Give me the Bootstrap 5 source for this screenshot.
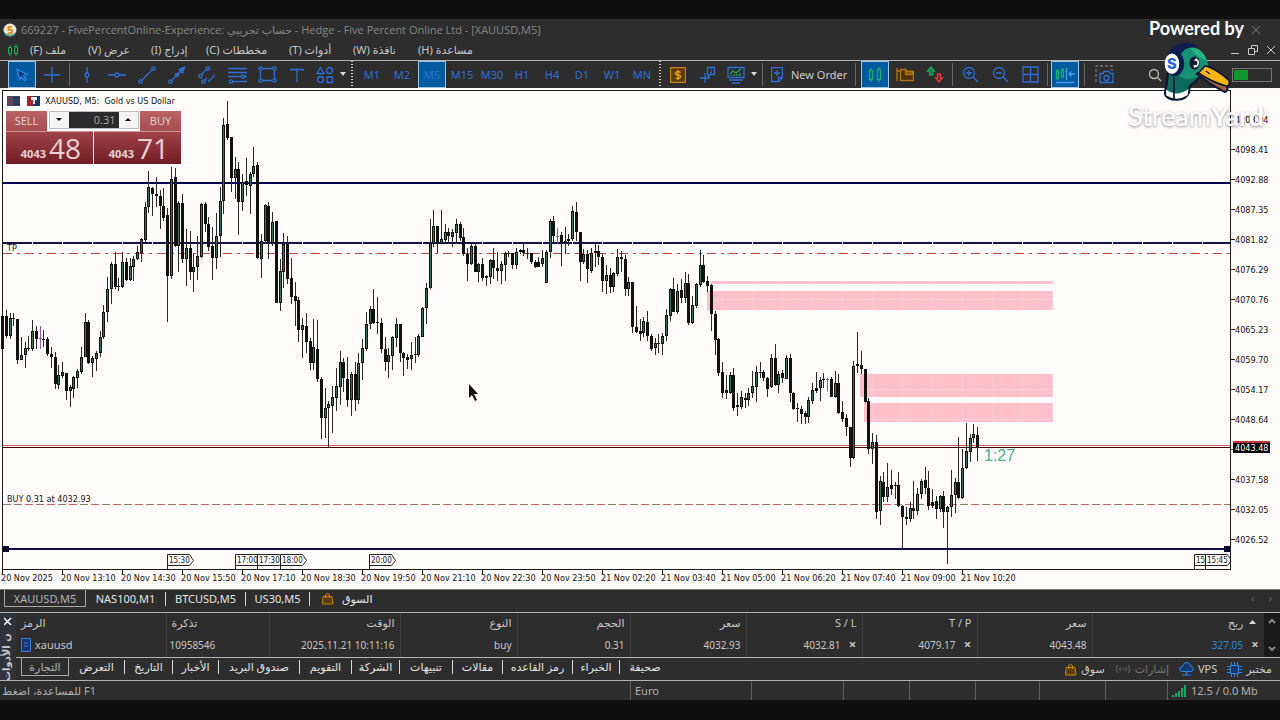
<!DOCTYPE html>
<html lang="ar" dir="ltr">
<head>
<meta charset="utf-8">
<meta name="viewport" content="width=device-width, initial-scale=1">
<title>XAUUSD,M5</title>
<link href="https://cdn.jsdelivr.net/npm/bootstrap@5.3.0/dist/css/bootstrap.min.css" rel="stylesheet">
<style>
:root{--ui:#2d2d2d;--rule:#b4b4b4;--blue:#2f6fd6}
body{background:#0f0f0f;color:#c8c8c8;font:11px/16px "Noto Sans","Open Sans","DejaVu Sans",sans-serif;padding:19px 0}
button{font:inherit;color:inherit;background:none;border:0;padding:0}
svg{display:block}
.app{background:var(--ui)}
.titlebar{height:21px;padding:0 3px;color:#858585;gap:4px;font-family:"Open Sans","DejaVu Sans",sans-serif}
.menubar{height:20px}
.menubar button{white-space:nowrap;text-align:left}
.tools{height:28px;border-top:1px solid var(--rule);color:var(--blue);padding-left:7px}
.tool{width:30px;height:27px;display:flex;align-items:center;justify-content:center;flex:none}
.tool.on{background:#005a9e;border:1px solid #9fc6e6;width:28px;margin:0 1px}
.tool.slim{width:26px}
.drop{width:9px;display:flex;justify-content:center}
.tools svg{fill:none;stroke:currentColor;stroke-width:1.3}
.split{width:5px;height:23px;flex:none;background:linear-gradient(#666,#666) center/1px 100% no-repeat}
.split.wide{width:9px}
.grip{width:10px;height:27px;flex:none;background:repeating-linear-gradient(#ccc 0 1px,transparent 1px 3px) center/2px 100% no-repeat}
.grip.near{width:6px}
.meter{width:40px;height:14px;border:1px solid #777;padding:1px}
.meter div{background:#13962c;width:38%;height:100%}
.stage{position:relative;background:#fffcfb}
.plot{width:100%;height:auto;font-family:"DejaVu Sans Condensed","DejaVu Sans",sans-serif;font-size:9px}
.caption{position:absolute;left:7px;top:6px;color:#111;gap:7px;line-height:14px;font:9px/14px "DejaVu Sans Condensed","DejaVu Sans",sans-serif}
.deal{position:absolute;left:6px;top:23px;width:175px;color:#ecd3d3;font-family:"Open Sans",sans-serif}
.side{height:20px;width:41px;background:linear-gradient(#bb6365,#a44c50);font-size:11px;line-height:20px}
.quote{height:33px;width:87px;background:linear-gradient(#a0434a,#701c24);border-top:1px solid #cf9697;gap:3px;padding-right:12px}
.quote b{font-size:11px;line-height:14px;margin-bottom:3px}
.quote span{font-size:28px;line-height:32px}
.spin{height:18px;width:90px;border:1px solid #bbb}
.spin button{width:19px;background:#f4f4f4;color:#111;display:flex;align-items:center;justify-content:center}
.spin input{width:50px;background:#2b2b2b;border:0;color:#aaa;text-align:right;font-size:11px;padding:0 3px;border-radius:0}
.brandmark{position:absolute;right:15px;top:18px;width:137px;color:#fff;font-family:Lato,sans-serif;pointer-events:none}
.brandmark .by{font-size:18px;line-height:20px;font-weight:700;padding-left:21px;white-space:nowrap}
.brandmark svg{margin:4px 0 0 32px}
.brandmark .word{font-size:27px;line-height:28px;text-shadow:0 1px 3px #0007}
.tabs{height:23px}
.tabs button{white-space:nowrap;font-size:11px;height:17px;line-height:17px}
.tabs .sel{border:1px solid #a9a9a9;border-top:0;color:#b5b5b5}
.tabs .bar-after{border-right:1px solid #d8d8d8;height:14px;line-height:14px;margin-top:2px}
.charttabs{color:#e6e6e6;border-top:1px solid #777}
.box-top{border-top:1px solid var(--rule)}
.dock{width:16px;background:#30323a;position:relative;overflow:hidden}
.dock span{position:absolute;left:0;bottom:5px;height:42px;writing-mode:vertical-rl;transform:rotate(180deg);font:bold 10px/14px "DejaVu Sans",sans-serif;white-space:nowrap}
.trades{table-layout:fixed;width:100%;height:44px;border-collapse:collapse}
.trades th,.trades td{font-weight:400;height:20px;line-height:18px;padding:1px 5px 1px 3px;text-align:right;border-right:1px solid #404040;white-space:nowrap}
.trades td{font-size:10px}
.trades .start{text-align:left;padding-left:5px}
.trades th:last-child,.trades td:last-child{border-right:0;padding-right:5px}
.kill{font-weight:700;font-size:13px;margin-left:8px;width:8px;line-height:12px}
.scroller{width:16px;background:#191919;color:#888}
.tooltabs{height:23px;color:#e6e6e6}
.tooltabs .sel{width:48px;margin-left:5px;height:18px}
.tooltabs a{color:#cfcfcf;text-decoration:none;display:flex;align-items:center;gap:4px}
.services{gap:10px}
.status{height:20px;line-height:20px;color:#b0b0b0}
.status>div{border-right:1px solid #5e5e5e;padding-left:4px}
</style>
</head>
<body>
<div class="app">
  <header>
    <div class="titlebar d-flex align-items-center">
      <svg width="14" height="14" viewBox="0 0 14 14"><circle cx="7" cy="7" r="6.5" fill="#e9e4cf"/><path d="M1 9Q7 15 13 9L11 13H3Z" fill="#3c9a88"/><path d="M9 4H5.500V7Q9 6 9 8.500T5 10" fill="none" stroke="#d48b17" stroke-width="1.700"/></svg>
      <span>669227 - FivePercentOnline-Experience: حساب تجريبي - Hedge - Five Percent Online Ltd - [XAUUSD,M5]</span>
      <button class="ms-auto me-3" aria-label="Close"><svg width="10" height="10" viewBox="0 0 10 10" stroke="#777"><path d="M1 1 9 9M9 1 1 9"/></svg></button>
    </div>
    <nav class="menubar d-flex align-items-center" aria-label="Menu">
      <svg class="ms-2" width="10" height="13" viewBox="0 0 10 13" fill="none" stroke="#1fae5b"><path d="M.500 3.500h3v6h-3zM6.500 2.500h3v7h-3zM2 1v2M2 9v3M8 0v2M8 9v3"/></svg>
      <button dir="rtl" style="margin-left:12px;width:58px;text-align:left">ملف (F)</button>
      <button dir="rtl" style="width:63px">عرض (V)</button>
      <button dir="rtl" style="width:55px">إدراج (I)</button>
      <button dir="rtl" style="width:83px">مخططات (C)</button>
      <button dir="rtl" style="width:64px">أدوات (T)</button>
      <button dir="rtl" style="width:65px">نافذة (W)</button>
      <button dir="rtl">مساعدة (H)</button>
      <div class="ms-auto d-flex gap-2 me-1">
        <button aria-label="Minimize"><svg width="10" height="10" stroke="#ccc"><path d="M1 8.500h8"/></svg></button>
        <button aria-label="Restore"><svg width="10" height="10" fill="none" stroke="#ccc"><path d="M.500 3.500h6v6h-6zM3.500 3V.500h6v6H7"/></svg></button>
        <button aria-label="Close chart"><svg width="10" height="10" stroke="#ccc"><path d="M1 1 9 9M9 1 1 9"/></svg></button>
      </div>
    </nav>
    <div class="tools d-flex align-items-center" role="toolbar">
      <button class="tool on" aria-label="Cursor"><svg width="16" height="16"><path d="M3 2.500 13 7 9.500 8.500 12 12 10.500 13.500 7.500 10 5.500 12.500Z" fill="#123a6e" stroke="#3386e6"/></svg></button>
      <button class="tool" aria-label="Crosshair"><svg width="16" height="16"><path d="M8 0v6M8 10v6M0 8h6M10 8h6M6 8h4M8 6v4"/></svg></button>
      <span class="split"></span>
      <button class="tool" aria-label="Vertical line"><svg width="16" height="16"><path d="M8 0v6M8 10v6"/><circle cx="8" cy="8" r="2"/></svg></button>
      <button class="tool" aria-label="Horizontal line"><svg width="18" height="16"><path d="M0 8h7M11 8h7"/><circle cx="9" cy="8" r="2"/></svg></button>
      <button class="tool" aria-label="Trend line"><svg width="18" height="18"><path d="M3.500 14.500 14.500 3.500"/><circle cx="2.500" cy="15.500" r="1.700"/><circle cx="15.500" cy="2.500" r="1.700"/></svg></button>
      <button class="tool" aria-label="Arrow line"><svg width="18" height="18"><path d="M3.500 14.500 15 3"/><path d="M11 3.500 16.500 1 14.500 7Z" fill="currentColor"/><circle cx="2.500" cy="15.500" r="1.700"/><circle cx="9" cy="9" r="1.700"/></svg></button>
      <button class="tool" aria-label="Channel"><svg width="18" height="18"><path d="M3 9 9 3M6.500 14.500 9 12M10 16l7-7"/><circle cx="2.500" cy="10" r="1.700"/><circle cx="10" cy="2.500" r="1.700"/><circle cx="5.500" cy="15.500" r="1.700"/></svg></button>
      <button class="tool" aria-label="Fibonacci"><svg width="19" height="18"><path d="M0 2.500h19M0 6.500h19M0 10.500h13M5 15.500h14M17 10.500h2"/><circle cx="15" cy="10.500" r="1.700"/><circle cx="3" cy="15.500" r="1.700"/></svg></button>
      <button class="tool" aria-label="Rectangle"><svg width="19" height="17"><path d="M5 2.500h9M5 14.500h9M2.500 5v7M16.500 5v7"/><circle cx="2.500" cy="2.500" r="1.700"/><circle cx="16.500" cy="2.500" r="1.700"/><circle cx="2.500" cy="14.500" r="1.700"/><circle cx="16.500" cy="14.500" r="1.700"/></svg></button>
      <button class="tool" aria-label="Text"><svg width="14" height="14"><path d="M1 3V1.500h12V3M7 1.500V14"/></svg></button>
      <button class="tool slim" aria-label="Shapes"><svg width="18" height="18"><path d="M4.500 1.500 8 7.500H1ZM11 11h5.500v5.500H11z"/><circle cx="13.500" cy="4.500" r="3"/><circle cx="4.500" cy="13.500" r="3"/></svg></button>
      <button class="drop" aria-label="More shapes"><svg width="8" height="5"><path d="M1 0h6L4 4z" fill="#ddd" stroke="none"/></svg></button>
      <span class="grip"></span>
      <button class="tool">M1</button><button class="tool">M2</button><button class="tool on">M5</button><button class="tool">M15</button><button class="tool">M30</button><button class="tool">H1</button><button class="tool">H4</button><button class="tool">D1</button><button class="tool">W1</button><button class="tool">MN</button>
      <span class="grip near"></span>
      <button class="tool" aria-label="Trade"><svg width="16" height="16"><path d="M.500.500h15v15H.500z" fill="#5c3d05" stroke="#c4830f"/><path d="M10.500 5.500Q8 3.500 6 5.500T8 8 10 10.500 5.500 11M8 3v10" stroke="#f0a21a"/></svg></button>
      <button class="tool" aria-label="Data window"><svg width="18" height="18"><path d="M6 7v10M1 12h10M8.500 1.500h7v7h-4l-2 2v-2h-1zM12 3v1M12 5v3"/></svg></button>
      <button class="tool slim" aria-label="Indicators"><svg width="18" height="18"><path d="M1 1.500h16v10H1zM2 14h14M5 17h8"/><path d="m3 8 3-3 3 2 5-4M4 10V9M7 10V8M10 10V8M13 10V7" stroke="#24a862"/></svg></button>
      <button class="drop" aria-label="More indicators"><svg width="8" height="5"><path d="M1 0h6L4 4z" fill="#ddd" stroke="none"/></svg></button>
      <span class="split wide"></span>
      <button class="d-flex align-items-center gap-2 ps-1 text-nowrap" style="width:84px;color:#ccc"><svg width="12" height="16" class="flex-shrink-0" style="color:#2f6fd6"><path d="M.500.500h11v10l-4 4H.500zM7.500 14.500v-4h4M6 3v6M3 6h6"/></svg>New Order</button>
      <span class="split wide"></span>
      <button class="tool on" aria-label="Candles"><svg width="14" height="16" style="color:#17b06b"><path d="M1.500 3.500h3v9h-3zM9.500 2.500h3v10h-3zM3 1v2M3 13v2M11 0v2M11 13v3"/></svg></button>
      <button class="tool" aria-label="Templates"><svg width="18" height="16" style="color:#b3760f"><path d="M1 1v13M1 4h3M4.500 2.500h5l2 2h6v9h-13z" fill="#4a3209"/><path d="M9.500 4.500h7v3h-7z" fill="#7a500c"/></svg></button>
      <button class="tool" aria-label="Auto trading"><svg width="18" height="18"><path d="M5 1 1.500 5h2v4h3V5h2z" fill="#14733f" stroke="#1da35d"/><path d="m13 16 3.500-4h-2V8h-3v4h-2z" fill="#7c1d25" stroke="#e03a47"/></svg></button>
      <span class="split"></span>
      <button class="tool" aria-label="Zoom in"><svg width="17" height="17"><circle cx="7" cy="7" r="5.500"/><path d="m11 11 5 5M7 4v6M4 7h6"/></svg></button>
      <button class="tool" aria-label="Zoom out"><svg width="17" height="17"><circle cx="7" cy="7" r="5.500"/><path d="m11 11 5 5M4 7h6"/></svg></button>
      <button class="tool" aria-label="Tile windows"><svg width="17" height="17"><path d="M1 1h15v15H1zM8.500 1v15M1 8.500h15"/></svg></button>
      <span class="split"></span>
      <button class="tool on" aria-label="Chart shift"><svg width="20" height="18"><path d="M1.500 5h2v7h-2zM6.500 4h2v7h-2zM2.500 3v2M2.500 12v2M7.500 2v2" stroke="#17b06b"/><path d="M11.500 2v12M14 8h6M16.500 5.500 14 8l2.500 2.500M1 16.500h18" stroke="#4a9cf0"/></svg></button>
      <span class="split wide"></span>
      <button class="tool" aria-label="Screenshot"><svg width="19" height="19"><path d="M1 17V1h16v5" stroke-dasharray="3 2" stroke="#777"/><path d="M5 8.500h3l1-2h5l1 2h3v9H5z"/><circle cx="11.500" cy="13" r="2.500"/></svg></button>
      <button class="tool ms-auto" aria-label="Search" style="color:#bbb"><svg width="14" height="14"><circle cx="6" cy="6" r="4.500"/><path d="m9 9 4 4"/></svg></button>
      <button class="tool ms-4 me-2 ps-1" aria-label="Level"><svg width="12" height="14"><path d="M6 1 2 5h3v5h3V5h2z" stroke="#1da35d"/></svg></button>
      <div class="meter me-2" role="img" aria-label="Connection"><div></div></div>
    </div>
  </header>

  <main class="stage">
    <svg class="plot" viewBox="0 88 1280 501" id="plot" role="img" aria-label="XAUUSD M5"></svg>
    <div class="caption d-flex align-items-center">
      <svg width="13" height="10"><path d="M0 0h13v10H0z" fill="#34486e"/><path d="M0 2h6M0 5h6M0 8h6" stroke="#c0392b"/><path d="M6 2h7M6 5h7M6 8h7" stroke="#1c2a4b"/></svg>
      <svg width="13" height="10"><path d="M0 0h6v10H0z" fill="#a5202a"/><path d="M6 0h7v10H6z" fill="#17356f"/><path d="M4 1h6v3H8v4H6V4H4z" fill="#fff"/></svg>
      <span style="margin-left:-2px;white-space:pre">XAUUSD, M5:  Gold vs US Dollar</span>
    </div>
    <div class="deal">
      <div class="d-flex justify-content-between">
        <button class="side">SELL</button>
        <div class="spin d-flex">
          <button aria-label="Less"><svg width="6" height="4"><path d="M0 0h6L3 3z"/></svg></button>
          <input class="flex-fill" aria-label="Volume" value="0.31">
          <button aria-label="More"><svg width="6" height="4"><path d="M0 3h6L3 0z"/></svg></button>
        </div>
        <button class="side">BUY</button>
      </div>
      <div class="d-flex justify-content-between">
        <div class="quote d-flex align-items-end justify-content-end"><b>4043</b><span>48</span></div>
        <div class="quote d-flex align-items-end justify-content-end"><b>4043</b><span>71</span></div>
      </div>
    </div>
  </main>

  <nav class="tabs charttabs d-flex" aria-label="Charts">
    <button class="sel ms-1" style="width:82px">XAUUSD,M5</button>
    <button class="bar-after" style="width:80px">NAS100,M1</button>
    <button class="bar-after" style="width:80px">BTCUSD,M5</button>
    <button class="bar-after" style="width:64px">US30,M5</button>
    <button class="d-flex align-items-center gap-2 ms-2 ps-1"><svg width="12" height="13" fill="#5d3c02" stroke="#c4830f"><path d="M1 4.500h9l1 7.500H.500zM3.500 6V3q2-3.500 4 0v3"/></svg>السوق</button>
    <span class="ms-auto me-2" style="color:#666">‹ &nbsp; &nbsp; ›</span>
  </nav>

  <section class="box-top d-flex">
    <div class="dock flex-shrink-0"><button class="d-block ms-1 mt-1" aria-label="Close toolbox"><svg width="8" height="9" stroke="#fff" stroke-width="1.500"><path d="M0 1 7 8M7 1 0 8"/></svg></button><span dir="rtl">ن الأدوات</span></div>
    <div class="flex-fill" style="min-width:0">
      <div class="d-flex">
        <table class="trades">
          <colgroup><col style="width:150px"><col style="width:103px"><col style="width:131px"><col style="width:117px"><col style="width:113px"><col style="width:116px"><col style="width:116px"><col style="width:115px"><col style="width:115px"><col></colgroup>
          <thead><tr><th class="start">الرمز</th><th class="start">تذكرة</th><th>الوقت</th><th>النوع</th><th>الحجم</th><th>سعر</th><th>S / L</th><th>T / P</th><th>سعر</th><th>ربح &nbsp;<svg class="d-inline-block" width="7" height="8" fill="#ddd"><path d="M0 4h7L3.500 0z"/></svg>&nbsp;</th></tr></thead>
          <tbody><tr><td class="start" style="font-size:11px"><span class="d-flex align-items-center gap-1"><svg width="10" height="14" fill="#14386e" stroke="#3f7fd8"><path d="M.500.500h9v13h-9zM3 5h4M3 8h4"/></svg>xauusd</span></td><td class="start" style="padding-left:3px">10958546</td><td>2025.11.21 10:11:16</td><td>buy</td><td>0.31</td><td>4032.93</td><td>4032.81<button class="kill">×</button></td><td>4079.17<button class="kill">×</button></td><td>4043.48</td><td><span style="color:#2f86cf">327.05</span><button class="kill">×</button></td></tr></tbody>
        </table>
        <div class="scroller flex-shrink-0 d-flex flex-column align-items-center justify-content-between py-1"><svg width="8" height="8" fill="none" stroke="#888" stroke-width="2"><path d="m1 6 3-3 3 3"/></svg><svg width="8" height="8" fill="none" stroke="#888" stroke-width="2"><path d="m1 2 3 3 3-3"/></svg></div>
      </div>
      <div class="box-top tabs tooltabs d-flex">
        <button class="sel">التجارة</button>
        <button class="bar-after" style="width:56px">التعرض</button>
        <button class="bar-after" style="width:48px">التاريخ</button>
        <button class="bar-after" style="width:46px">الأخبار</button>
        <button class="bar-after" style="width:81px">صندوق البريد</button>
        <button class="bar-after" style="width:52px">التقويم</button>
        <button class="bar-after" style="width:48px">الشركة</button>
        <button class="bar-after" style="width:53px">تنبيهات</button>
        <button class="bar-after" style="width:50px">مقالات</button>
        <button class="bar-after" style="width:70px">رمز القاعده</button>
        <button class="bar-after" style="width:47px">الخبراء</button>
        <button class="bar-after border-0" style="width:50px">صحيفة</button>
        <div class="ms-auto d-flex services me-2">
          <a href="#"><svg width="12" height="13" fill="#5d3c02" stroke="#c4830f"><path d="M1 4.500h9l1 7.500H.500zM3.500 6V3q2-3.500 4 0v3"/></svg>سوق</a>
          <a href="#" style="color:#777"><svg width="16" height="10" fill="none" stroke="#666"><path d="M2.500 1Q0 5 2.500 9M5.500 3Q4 5 5.500 7M13.500 1Q16 5 13.500 9M10.500 3Q12 5 10.500 7M8 4v2"/></svg>إشارات</a>
          <a href="#"><svg width="15" height="14" fill="#14386e" stroke="#2f86e0"><path d="M4 9.500Q.500 9.500.500 7T3.500 4.500Q4 .500 8 .500T11.500 4.500Q14.500 4.500 14.500 7T11 9.500ZM7.500 10v3M3 13h9"/></svg>VPS</a>
          <a href="#"><svg width="15" height="15" fill="#14386e" stroke="#2f86e0"><path d="M3.500 3.500h8v8h-8zM4.500 0v3M7.500 0v3M10.500 0v3M4.500 12v3M7.500 12v3M10.500 12v3M0 4.500h3M0 7.500h3M0 10.500h3M12 4.500h3M12 7.500h3M12 10.500h3"/></svg>مختبر</a>
        </div>
      </div>
    </div>
  </section>
  <footer class="status box-top d-flex">
    <div class="flex-fill" style="padding-left:2px">للمساعدة، اضغط F1</div>
    <div style="width:121px">Euro</div><div style="width:92px"></div><div style="width:66px"></div><div style="width:66px"></div><div style="width:64px"></div><div style="width:66px"></div><div style="width:62px"></div>
    <div class="border-0 d-flex align-items-center gap-1" style="width:112px"><svg width="15" height="12" fill="#18a565"><path d="M0 10h2v2H0zM3 8h2v4H3zM6 6h2v6H6zM9 3h2v9H9zM12 0h2v12h-2z"/></svg>12.5 / 0.0 Mb</div>
  </footer>
</div>

<div class="brandmark">
  <div class="by">Powered by</div>
  <svg width="73" height="60" viewBox="930 95 220 180" stroke-linejoin="round">
    <path d="M955 175Q952 215 945 250Q950 268 980 268Q1010 268 1018 245Q1015 225 1035 215L1060 190V150L1000 130Z" fill="#0d6b5d" stroke="#0a1536" stroke-width="7"/>
    <path d="M948 238Q980 262 1016 236L1013 255Q980 275 949 256Z" fill="#fff"/>
    <path d="M972 200V268" stroke="#0a1536" stroke-width="5"/>
    <path d="M985 115Q1040 98 1064 135Q1076 155 1076 172L1042 200Q1010 215 985 195Z" fill="#159274"/>
    <path d="M1020 112Q1060 112 1070 150L1045 140Z" fill="#28b488"/>
    <path d="M1040 190Q1080 222 1125 246Q1138 240 1132 228L1060 180Z" fill="#a05f3c" stroke="#0a1536" stroke-width="6"/>
    <path d="M1046 188L1066 166Q1098 174 1138 210Q1142 224 1132 228Q1085 215 1046 188Z" fill="#fbb615" stroke="#0a1536" stroke-width="5"/>
    <path d="M1068 182l12 9" stroke="#0a1536" stroke-width="4"/>
    <ellipse cx="1034" cy="158" rx="15" ry="20" fill="#0a1536"/><path d="M1040 143Q1028 150 1032 172Q1048 172 1048 154Z" fill="#fff"/><circle cx="1036" cy="158" r="7" fill="#0a1536"/>
    <path d="M956 140Q960 98 1010 97Q1035 98 1045 110Q1000 105 990 140Z" fill="#0f2050"/>
    <ellipse cx="974" cy="160" rx="29" ry="38" fill="#0a1b4c"/>
    <ellipse cx="966" cy="160" rx="22" ry="31" fill="#fff"/>
    <text x="966" y="176" text-anchor="middle" font-family="Inter,sans-serif" font-weight="800" font-size="44" fill="#1b62e6">S</text>
  </svg>
  <div class="word"><span style="font-weight:400">Stream</span><b>Yard</b></div>
</div>

<script>
// Each candle: high, body top, body bottom, low, kind (g rising, b falling, p doji)
const candles = `316 316 349 349 b,310 316 336 338 b,313 318 336 339 g,313 318 319 326 b,319 319 360 364 b,337 355 360 360 g,342 348 355 368 g,336 348 349 351 b,320 331 349 351 g,326 331 339 349 b,326 338 339 349 p,330 339 340 347 b,337 339 354 356 b,347 354 357 368 b,352 357 384 389 b,365 375 385 389 g,362 372 376 378 g,373 373 391 400 b,385 387 391 407 g,376 377 389 398 g,369 371 378 388 g,347 357 372 374 g,313 322 357 357 g,320 322 363 364 b,356 358 363 377 g,351 353 359 371 g,331 337 353 357 g,305 312 337 339 g,277 289 312 322 g,262 264 289 304 g,252 264 287 289 b,278 286 287 291 b,252 262 287 288 g,258 262 280 281 b,258 266 280 281 g,256 259 267 281 g,246 252 259 260 g,238 239 253 262 g,202 207 240 242 g,171 187 207 213 g,187 188 194 216 b,177 194 196 207 b,190 196 206 229 b,188 206 218 221 b,208 215 276 322 b,167 179 276 279 g,168 177 246 247 b,201 203 246 272 g,194 203 259 263 b,229 248 259 286 g,231 248 272 280 b,254 267 272 292 g,236 256 267 280 g,203 204 257 258 g,202 204 224 232 b,217 224 247 251 b,227 246 258 280 b,213 236 258 269 g,187 201 236 257 g,118 125 201 214 g,101 124 138 140 b,137 137 178 192 b,157 169 178 199 g,162 169 202 235 b,174 182 202 211 g,158 181 185 196 b,172 174 186 214 g,147 166 174 177 g,162 165 258 259 b,234 241 259 278 g,204 205 241 244 g,202 206 243 259 b,212 222 243 246 g,221 221 303 303 b,259 271 303 311 g,233 244 272 288 g,236 244 279 284 b,258 278 297 304 b,282 296 301 326 b,297 300 330 342 b,318 325 330 358 g,313 326 342 353 b,338 341 363 370 b,319 347 363 370 g,320 349 379 382 b,377 379 418 439 b,388 408 418 438 g,401 404 408 447 g,386 397 406 433 g,368 386 398 411 g,351 362 387 405 g,358 362 378 392 b,357 379 400 407 b,372 374 400 416 g,362 374 400 411 b,353 363 400 404 g,339 348 363 380 g,312 324 349 351 g,306 309 324 329 g,289 309 323 324 b,297 322 323 334 b,318 323 349 353 b,337 349 362 371 b,348 355 362 378 g,336 337 356 370 g,318 324 338 347 g,324 324 353 362 b,352 353 358 376 b,354 357 360 369 b,342 355 359 370 g,337 354 355 363 b,334 336 355 357 g,307 308 337 337 g,283 288 308 324 g,219 243 288 289 g,210 226 244 247 g,226 226 243 253 b,210 239 244 244 g,224 232 240 242 g,228 232 236 244 b,229 232 237 247 g,219 224 233 243 g,222 224 238 241 b,228 237 254 256 b,248 254 264 281 b,242 246 264 265 g,243 246 272 272 b,263 264 272 282 g,258 264 278 281 b,275 276 278 286 b,259 260 277 284 g,248 260 268 279 b,252 268 271 281 b,261 264 271 284 g,252 253 265 281 g,251 253 254 257 b,253 253 265 269 b,248 252 265 269 g,249 250 252 254 b,244 250 253 256 b,248 253 254 259 b,253 253 262 264 b,260 262 267 268 b,257 262 267 267 b,250 258 264 267 g,250 252 283 283 g,219 221 252 258 g,216 221 236 243 b,228 236 237 243 p,232 235 243 266 b,227 241 243 254 b,234 239 241 246 b,206 211 239 241 g,202 212 232 241 b,232 232 262 281 b,249 254 262 264 g,250 254 269 283 b,248 253 271 273 g,244 251 253 267 b,245 251 257 265 b,254 257 281 292 b,265 275 281 294 g,268 275 287 293 b,272 273 287 292 g,249 257 274 276 g,251 257 259 272 b,255 259 289 296 b,277 282 289 296 g,282 282 327 333 b,306 327 332 333 b,319 331 334 341 b,317 321 333 337 g,311 322 336 341 b,334 336 349 351 b,338 343 348 355 g,334 343 344 353 b,333 336 344 355 g,309 315 336 341 g,288 289 316 321 g,278 289 312 312 b,284 291 312 314 g,279 290 298 303 b,272 283 298 303 g,274 283 323 325 b,296 305 323 324 g,283 284 306 308 g,250 265 285 287 g,255 265 282 283 b,276 281 286 292 b,284 285 314 331 b,311 314 340 355 b,338 339 373 376 b,362 372 393 398 b,375 390 393 399 b,372 375 393 394 g,368 375 408 411 b,393 405 407 416 b,391 397 407 409 g,393 398 400 408 b,388 393 400 406 g,371 386 393 398 g,366 372 387 402 g,362 372 373 378 b,370 372 378 381 b,377 378 389 397 b,354 358 387 388 g,344 358 385 386 b,371 374 385 393 g,370 373 378 383 b,355 358 379 379 g,354 358 393 402 b,392 393 409 410 b,403 408 409 422 b,406 409 414 424 b,411 413 417 424 b,397 400 417 423 g,383 390 401 404 g,372 388 391 393 b,377 380 388 401 g,373 379 380 388 b,378 379 380 391 p,377 379 397 397 b,371 383 397 398 g,374 383 413 414 b,401 412 419 422 b,414 418 427 436 b,427 427 458 467 b,361 366 458 459 g,332 364 366 373 b,351 365 369 374 b,369 369 402 403 b,398 401 449 454 b,433 442 449 464 g,435 442 512 519 b,476 481 511 525 g,472 482 497 502 b,463 487 497 502 g,470 485 489 495 b,482 485 486 499 b,472 485 506 507 b,505 506 517 549 b,507 517 519 525 b,502 508 519 522 g,481 508 511 519 b,488 494 511 515 g,479 481 494 499 g,467 480 488 494 b,471 488 506 510 b,489 502 506 508 b,496 501 509 519 b,495 496 509 512 g,491 496 512 528 b,506 507 512 564 g,470 495 507 517 g,478 482 495 513 g,437 482 498 499 b,449 468 498 499 g,423 451 468 469 g,434 438 452 462 g,424 434 438 443 g,427 435 447 461 b`;
const line = (x1, y1, x2, y2, c, w = 1, d = '') => `<path d="M${x1} ${y1}L${x2} ${y2}" stroke="${c}" stroke-width="${w}" stroke-dasharray="${d}" shape-rendering="crispEdges"/>`;
const rect = (x, y, w, h, f, s = 'none') => `<rect x="${x}" y="${y}" width="${w}" height="${h}" fill="${f}" stroke="${s}" shape-rendering="crispEdges"/>`;
const text = (x, y, t, c = '#111', a = '') => `<text x="${x}" y="${y}" fill="${c}" ${a}>${t}</text>`;
let s = rect(0, 88, 1280, 2, '#fff') + rect(2.5, 90.5, 1228, 479, 'none', '#1a1a1a');
// supply zones with their faint grid
[[711, 281, 3], [707, 291, 19], [860, 374, 23], [864, 403, 19]].forEach(([x, y, h]) => {
  s += rect(x, y, 1053 - x, h, '#ffbfcb');
  for (let g = 722; g < 1053; g += 30) if (g > x) s += line(g + .5, y, g + .5, y + h, '#ffd3db', 1, '2 1');
});
[[711, 299.5], [864, 389.5], [868, 419.5]].forEach(([x, y]) => s += line(x, y, 1053, y, '#ffdce2', 1, '2 1'));
s += line(3, 253.5, 1231, 253.5, '#c8433a', 1, '9 5 3 5') + line(3, 504.5, 1231, 504.5, '#8a7a74', 1, '8 3') + line(25, 504.5, 1231, 504.5, '#d0605c', 1, '8 14');
s += line(3, 183, 1231, 183, '#00004f', 2) + line(3, 243, 1231, 243, '#12124f', 2);
for (let g = 32; g < 1230; g += 30) s += line(g, 243, g + 1, 243, '#eef', 2);
s += line(3, 445.5, 1231, 445.5, '#d8585a', 1) + line(3, 447.5, 1231, 447.5, '#3a060c', 1);
candles.split(',').forEach((c, i) => {
  const [h, t, b, l, k] = c.split(' '), x = Math.round(2 + 3.75 * i);
  const ink = k === 'p' ? '#a050a8' : '#111';
  s += line(x + .5, h, x + .5, l, k === 'p' ? ink : '#2a2a2a');
  s += rect(x - 1, t, 3, Math.max(1, b - t), ink);
  if (k === 'g' && b - t > 2) s += rect(x, +t + 1, 1, b - t - 2, '#3f7048');
});
s += line(3, 549, 1231, 549, '#10104f', 2) + rect(3, 546, 6, 6, '#05052e') + rect(1224, 546, 7, 6, '#05052e');
// session flags
[[167, '15:30'], [235, '17:00'], [257, '17:30'], [280, '18:00'], [369, '20:00'], [1194, '15'], [1205, '15:45']].forEach(([x, t]) => {
  const w = x === 1194 ? 11 : 22;
  s += `<path d="M${x + .5} 569V554.500h${w}l4 6-4 5H${x + .500}" fill="#fffcfb" stroke="#222"/>` + text(x + 2, 563, t, '#111', 'font-size="8"');
});
s += rect(1231, 553, 5, 14, '#fffcfb') + line(1230.5, 90, 1230.5, 570, '#1a1a1a');
'20 Nov 2025,20 Nov 13:10,20 Nov 14:30,20 Nov 15:50,20 Nov 17:10,20 Nov 18:30,20 Nov 19:50,20 Nov 21:10,20 Nov 22:30,20 Nov 23:50,21 Nov 02:20,21 Nov 03:40,21 Nov 05:00,21 Nov 06:20,21 Nov 07:40,21 Nov 09:00,21 Nov 10:20'.split(',').forEach((t, i) => {
  s += line(2.5 + i * 60, 570, 2.5 + i * 60, 574, '#1a1a1a') + text(1 + i * 60, 581, t);
});
'4103.94,4098.41,4092.88,4087.35,4081.82,4076.29,4070.76,4065.23,4059.70,4054.17,4048.64,,4037.58,4032.05,4026.52'.split(',').forEach((t, i) => {
  s += line(1231, 119.5 + i * 30, 1235, 119.5 + i * 30, '#1a1a1a') + text(1235, 123 + i * 30, t);
});
s += rect(1233, 441, 37, 12, '#000') + rect(1233, 441, 37, 2, '#c3333a') + text(1235, 451, '4043.48', '#fff');
s += text(7, 251, 'TP') + text(7, 502, 'BUY 0.31 at 4032.93');
s += text(984, 461, '1:27', '#4aae86', 'style="font:16px Liberation Sans,sans-serif"');
s += '<path d="M469 384v14l3-3 3 6 2-1-3-6h4z" fill="#111"/>';
document.getElementById('plot').innerHTML = s;
</script>
<script src="https://cdn.jsdelivr.net/npm/bootstrap@5.3.0/dist/js/bootstrap.bundle.min.js"></script>
</body>
</html>
